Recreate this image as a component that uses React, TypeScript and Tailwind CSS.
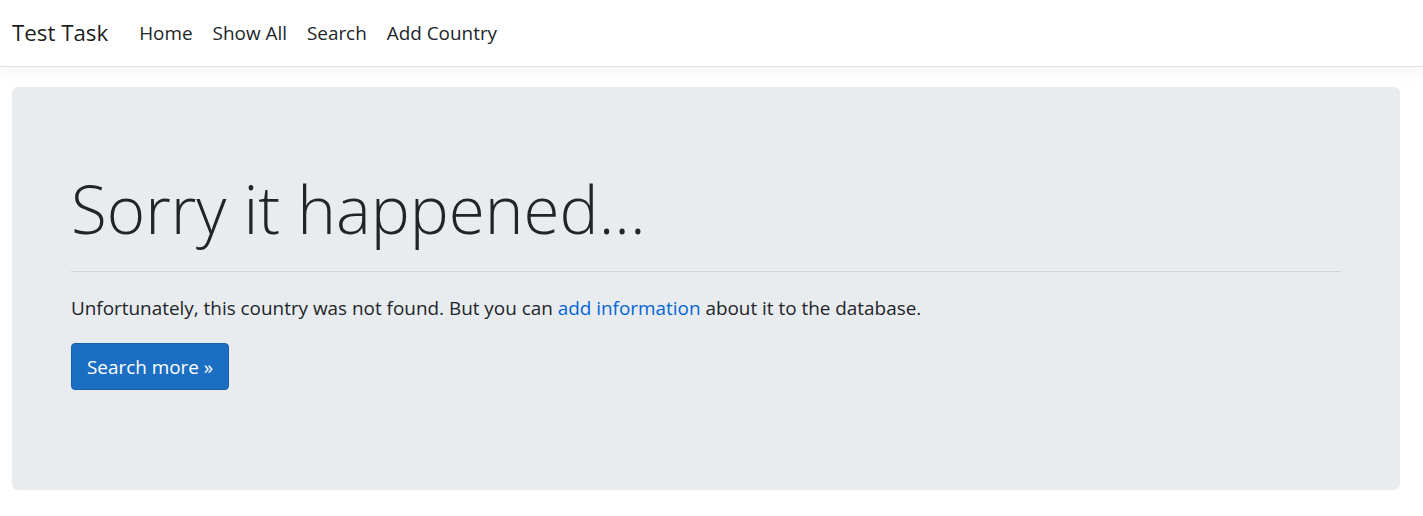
const FONT = "font-['Segoe_UI','Open_Sans','Noto_Sans',sans-serif]";

const NAV_LINKS = ['Home', 'Show All', 'Search', 'Add Country'];

export default function App() {
	return (
		<div className={`${FONT} min-h-[516px] bg-white text-[#212529]`}>
			<header className="relative z-10 border-b border-[#dee2e6] bg-white shadow-[0_5px_15px_rgba(0,0,0,0.05)]">
				<nav className="flex h-[66px] items-center px-3">
					<a className="mr-[21px] text-[22.3px] text-black/90" href="#">
						Test Task
					</a>

					<ul className="flex items-center">
						{NAV_LINKS.map((label) => (
							<li key={label}>
								<a className="px-[10px] text-[18.9px] text-[#212529]" href="#">
									{label}
								</a>
							</li>
						))}
					</ul>
				</nav>
			</header>

			<main className="pt-5 pr-[23px] pb-[26px] pl-3">
				<div className="rounded-[6px] bg-[#e9ecef] px-[59px] pt-20 pb-20">
					<h1 className="text-[65.6px] leading-[84px] font-light">
						Sorry it happened...
					</h1>

					<hr className="mt-5 mb-[21px] border-t border-black/10" />

					<p className="text-[18.9px] leading-[30px]">
						Unfortunately, this country was not found. But you can{' '}
						<a className="text-[#0366d6]" href="#">
							add information
						</a>{' '}
						about it to the database.
					</p>

					<p className="mt-5 mb-5">
						<a
							className="inline-block rounded-[4px] border border-[#1861ac] bg-[#1b6ec2] px-[15px] py-[7.5px] text-[18.9px] leading-[30px] text-white"
							href="#"
						>
							Search more »
						</a>
					</p>
				</div>
			</main>
		</div>
	);
}
